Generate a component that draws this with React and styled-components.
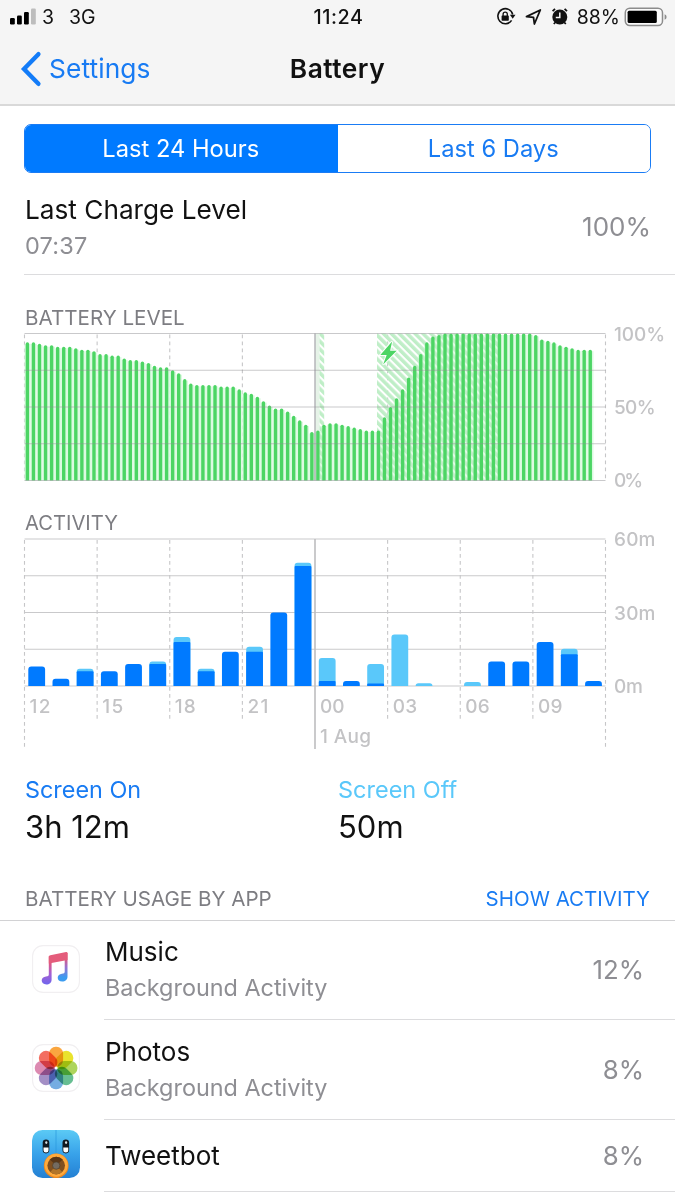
import React from "react";
import styled, { createGlobalStyle } from "styled-components";

const GlobalStyle = createGlobalStyle`
  * { box-sizing: border-box; }
  body {
    margin: 0;
    background: #fff;
    font-family: Inter, "Liberation Sans", sans-serif;
    color: #111;
  }
  svg { display: block; flex: none; overflow: visible; }
`;

const Screen = styled.main`
  width: 675px;
  height: 1200px;
  overflow: hidden;
  background: #fff;
`;

/* every label sets its own size, tracking and line box */
const Label = styled.span`
  display: block;
  white-space: nowrap;
  font-size: ${(p) => p.$size}px;
  line-height: ${(p) => p.$line || 32}px;
  letter-spacing: ${(p) => p.$track || 0}px;
  font-weight: ${(p) => p.$weight || 400};
  color: ${(p) => p.$color || "#111"};
`;

const Header = styled.header`
  height: 106px;
  background: #f5f5f5;
  border-bottom: 2px solid #d9d9d9;
`;

const StatusBar = styled.div`
  height: 34px;
  display: grid;
  grid-template-columns: 1fr auto 1fr;
  align-items: center;
  padding: 0 8px 0 10px;
`;

const StatusLeft = styled.div`
  display: flex;
  align-items: center;
  gap: 5px;
`;

const Network = styled(Label)`
  margin-left: 10px;
`;

const StatusRight = styled.div`
  display: flex;
  align-items: center;
  justify-content: flex-end;
`;

const Percent = styled(Label)`
  margin: 0 5px 0 6px;
`;

const NavBar = styled.nav`
  height: 70px;
  display: grid;
  grid-template-columns: 1fr auto 1fr;
  align-items: center;
  padding: 0 20px;
`;

const Back = styled.a`
  display: flex;
  align-items: center;
  gap: 7px;
`;

const Segments = styled.div`
  display: flex;
  width: 627px;
  height: 49px;
  margin: 18px 0 0 24px;
  border: 1.5px solid #1a7cf5;
  border-radius: 7px;
  overflow: hidden;
`;

const Segment = styled.button`
  flex: 1;
  border: 0;
  padding: 0 1px 0 0;
  display: flex;
  align-items: center;
  justify-content: center;
  font-family: inherit;
  background: ${(p) => (p.$active ? "#007aff" : "#fff")};
`;

const ChargeRow = styled.section`
  display: flex;
  justify-content: space-between;
  align-items: center;
  height: 102px;
  margin-left: 24px;
  padding: 6px 24px 0 1px;
  border-bottom: 1px solid #dcdcde;
`;

const ChartBlock = styled.section`
  padding: ${(p) => p.$top}px 0 0 24px;
`;

const ChartTitle = styled(Label)`
  padding-left: 1px;
`;

const Totals = styled.section`
  display: grid;
  grid-template-columns: 313px 1fr;
  padding: 22.5px 0 0 25px;
`;

const ListHeader = styled.div`
  display: flex;
  justify-content: space-between;
  align-items: center;
  height: 73px;
  padding: 31px 25px 0 25px;
  border-bottom: 1px solid #d2d2d4;
`;

const AppRow = styled.div`
  display: flex;
  align-items: center;
  height: ${(p) => p.$height}px;
  padding-left: 32px;
`;

const AppIcon = styled.div`
  padding-bottom: 3px;
`;

const AppBody = styled.div`
  flex: 1;
  align-self: stretch;
  display: flex;
  justify-content: space-between;
  align-items: center;
  margin-left: 24px;
  padding: 1px 31px 0 1px;
  border-bottom: 1px solid #dcdcde;
`;

const BLUE = "#187bf3";
const GREY = "#8e8e93";
const TITLE = "#7d7d82";
const AXIS = "#c3c3c5";
const LINE = "#c6c6c8";

const levels = [
  94, 94, 93, 92, 92, 91, 91, 91, 90, 89, 89, 88, 86, 86, 85, 85, 83, 82, 82,
  81, 80, 78, 77, 77, 75, 73, 69, 66, 65, 65, 65, 65, 64, 64, 64, 62, 60, 59,
  57, 54, 51, 49, 49, 47, 44, 41, 38, 33, 34, 38, 39, 39, 38, 37, 36, 35, 34,
  34, 34, 43, 50, 56, 62, 70, 78, 86, 94, 98, 99, 100, 100, 100, 100, 100, 100,
  100, 100, 100, 100, 100, 100, 100, 100, 100, 99, 96, 95, 94, 92, 91, 90, 89,
  89, 89,
];

// [minutes on screen, minutes off screen] for each hour
const activity = [
  [8, 0], [3, 0], [6, 1], [6, 0], [9, 0], [9, 1], [18, 2], [6, 1],
  [14, 0], [14, 2], [30, 0], [49, 1.3], [2, 9.4], [2, 0], [1, 8], [0, 21],
  [0, 1.1], [0, 0], [0, 1.6], [10, 0], [10, 0], [18, 0], [13, 2.2], [2, 0],
];

const WIDTH = 581;
const HEIGHT = 147;
const SLOT = WIDTH / 96;
const HOUR = WIDTH / 24;
const hours = ["12", "15", "18", "21", "00", "03", "06", "09"];

const AxisText = ({ x, y, w, children }) => (
  <text x={x} y={y} textLength={w} fontSize="19" fontWeight="500" fill={AXIS}>
    {children}
  </text>
);

const Rows = () =>
  [0, 1, 2, 3, 4].map((n) => (
    <line
      key={n}
      x1="0"
      x2={WIDTH}
      y1={(n * HEIGHT) / 4}
      y2={(n * HEIGHT) / 4}
      stroke="#8e8e93"
      strokeOpacity="0.48"
      strokeWidth="1.2"
    />
  ));

const Dash = ({ x, to }) => (
  <line x1={x} x2={x} y1="0" y2={to} stroke={LINE} strokeWidth="1.1" strokeDasharray="3.7 3.3" strokeDashoffset="-1" />
);

const LevelChart = () => (
  <svg width="651" height="160" viewBox="-0.5 -6.5 651 160">
    <defs>
      <pattern id="hatch" width="5.6" height="5.6" patternUnits="userSpaceOnUse" patternTransform="rotate(-45)">
        <rect width="3.5" height="5.6" fill="#bfeec7" />
      </pattern>
    </defs>
    {[0, 3, 6, 9, 15, 24].map((h) => (
      <Dash key={h} x={h * HOUR} to={HEIGHT} />
    ))}
    {levels.map((v, i) => (
      <rect
        key={i}
        x={i * SLOT}
        y={HEIGHT - (v * HEIGHT) / 100 + 1.5}
        width={SLOT + 0.1}
        height={(v * HEIGHT) / 100 - 1.5}
        fill="#dcfae1"
      />
    ))}
    <rect x="291" y="0" width="4" height={HEIGHT} fill="#e6f3e8" />
    <rect x="295" y="0" width="4.7" height={HEIGHT} fill="url(#hatch)" />
    <rect x="352.5" y="0" width="124" height={HEIGHT} fill="url(#hatch)" />
    {levels.map((v, i) => {
      const x = i * SLOT + 1.2;
      const y = HEIGHT - (v * HEIGHT) / 100;
      return <path key={i} d={`M${x} ${HEIGHT}V${y + 1.6}a1.7 1.6 0 0 1 3.4 0V${HEIGHT}z`} fill="#4cd564" />;
    })}
    <Rows />
    <line x1={HOUR * 12} x2={HOUR * 12} y1="0" y2={HEIGHT} stroke="#8e8e93" strokeOpacity="0.65" strokeWidth="1.5" />
    <path
      d="M367.6 8 L355.8 21.5 h6.4 L358.6 31 L372.2 17.2 h-6.6 L367.6 8z"
      fill="#4cd564"
      stroke="#fff"
      strokeWidth="2"
      paintOrder="stroke"
    />
    <AxisText x="589.5" y="7" w="51">100%</AxisText>
    <AxisText x="589.5" y="80.5" w="41.5">50%</AxisText>
    <AxisText x="589.5" y="153.5" w="29">0%</AxisText>
  </svg>
);

const ActivityChart = () => (
  <svg width="651" height="219" viewBox="-0.5 -7 651 219">
    <Rows />
    {[0, 3, 6, 9, 15, 18, 21, 24].map((h) => (
      <Dash key={h} x={h * HOUR} to={h % 24 === 0 ? 210 : 183} />
    ))}
    <line x1={HOUR * 12} x2={HOUR * 12} y1="0" y2="210" stroke="#bdbdbf" strokeWidth="1.6" />
    {activity.map(([on, off], i) => {
      const total = ((on + off) * HEIGHT) / 60;
      const r = Math.min(3, total);
      const x = i * HOUR + 3.8;
      const shape = (h, k) =>
        `M${x} ${HEIGHT}V${HEIGHT - h + k}q0 ${-k} ${k} ${-k}h${16.8 - 2 * k}q${k} 0 ${k} ${k}V${HEIGHT}z`;
      return (
        <g key={i}>
          {off > 0 && <path d={shape(total, r)} fill="#5ac8fa" />}
          {on > 0 && <path d={shape((on * HEIGHT) / 60, off ? 1 : r)} fill="#007aff" />}
        </g>
      );
    })}
    <AxisText x="589.5" y="7" w="41.5">60m</AxisText>
    <AxisText x="589.5" y="80.5" w="41.5">30m</AxisText>
    <AxisText x="589.5" y="154" w="29">0m</AxisText>
    {hours.map((h, i) => (
      <AxisText key={h} x={i * 3 * HOUR + 5} y="173.5" w={i < 4 ? 21 : 24.5}>
        {h}
      </AxisText>
    ))}
    <AxisText x="295.5" y="203.5" w="51">1 Aug</AxisText>
  </svg>
);

const Signal = () => (
  <svg width="27" height="18" viewBox="0 0 27 18">
    <rect x="0" y="10" width="4.8" height="6.5" rx="1.2" />
    <rect x="7" y="7.5" width="4.8" height="9" rx="1.2" />
    <rect x="14" y="4" width="4.8" height="12.5" rx="1.2" />
    <rect x="21" y="0.5" width="4.8" height="16" rx="1.2" fill="#bdbdbd" />
  </svg>
);

const StatusIcons = () => (
  <svg width="76" height="22" viewBox="495 6 76 22" fill="none" stroke="#111" strokeWidth="1.6">
    <path d="M511.6 20.4 A7.5 7.5 0 1 1 512.7 14.5" />
    <path d="M509.9 14.8h5.6l-2.8 3.9z" fill="#111" stroke="none" />
    <rect x="501.6" y="15.4" width="7.2" height="5.4" rx="0.7" fill="#111" stroke="none" />
    <path d="M503.1 16v-1.8a2.1 2.1 0 0 1 4.2 0V16" strokeWidth="1.3" />
    <path d="M526.5 16.6 L540.3 10 L534.4 24 L533.5 17.3 Z" strokeLinejoin="round" strokeWidth="1.8" />
    <circle cx="559.8" cy="17" r="7.5" fill="#111" stroke="none" />
    <path d="M552.6 11.2l2.4-2.3M564.6 8.9l2.4 2.3M555.2 22.5l-1.4 1.5M564.4 22.5l1.4 1.5" strokeWidth="1.8" />
    <path d="M559.8 12.6v5h-4" stroke="#f5f5f5" strokeWidth="1.5" />
  </svg>
);

const BatteryIcon = () => (
  <svg width="42" height="20" viewBox="0 0 42 20">
    <rect x="0.3" y="1.2" width="37.2" height="17.3" rx="4.5" fill="#fafafa" stroke="#8c8c8c" strokeWidth="1.5" />
    <rect x="2.6" y="3.8" width="29.2" height="12.2" rx="1.5" fill="#000" />
    <path d="M39.6 7.2q2 0.7 2 2.8t-2 2.8z" fill="#8c8c8c" />
  </svg>
);

const Chevron = () => (
  <svg width="22" height="36" viewBox="0 0 22 36" fill="none" stroke="#137cf8" strokeWidth="4.4" strokeLinecap="round">
    <path d="M18.4 3.2 L4 18 L18.4 32.8" />
  </svg>
);

const Tile = () => (
  <rect x="0.6" y="0.6" width="46.8" height="46.8" rx="10.5" fill="#fff" stroke="#f1eff1" strokeWidth="1.1" />
);

const MusicIcon = () => (
  <svg width="48" height="48" viewBox="0 0 48 48">
    <defs>
      <linearGradient id="noteL" x1="0" y1="0" x2="0" y2="1">
        <stop offset="0.2" stopColor="#e75676" />
        <stop offset="0.6" stopColor="#a85fd0" />
        <stop offset="1" stopColor="#6f66ee" />
      </linearGradient>
      <linearGradient id="noteR" x1="0" y1="0" x2="0" y2="1">
        <stop offset="0.15" stopColor="#e45575" />
        <stop offset="0.5" stopColor="#9a70d0" />
        <stop offset="0.85" stopColor="#3c9cf0" />
      </linearGradient>
    </defs>
    <Tile />
    <path d="M16.8 11h2.8v23.5c0 3.3-2.3 5-5.2 5-2.9 0-4.7-1.6-4.7-3.9 0-2.4 1.8-4 4.3-4.2 2-.2 2.8-.6 2.8-2z" fill="url(#noteL)" />
    <path d="M32.7 8h2.8v23.5c0 3.3-2.3 5-5.2 5-2.9 0-4.6-1.6-4.6-3.8 0-2.3 1.8-3.8 4.2-4 2-.2 2.8-.6 2.8-2z" fill="url(#noteR)" />
    <path d="M16.8 12q0-1.5 1.5-1.8l15.8-3.1q1.4-.2 1.4 1.2v6.7l-18.7 3.6z" fill="#e45c7b" />
  </svg>
);

const petals = ["#f99a25", "#e6df10", "#a3ce45", "#52b583", "#62a2de", "#967fbd", "#d77aa6", "#f15a4b"];

const Flower = styled.g`
  isolation: isolate;
`;

const Petal = styled.rect`
  mix-blend-mode: multiply;
`;

const PhotosIcon = () => (
  <svg width="48" height="48" viewBox="0 0 48 48">
    <Tile />
    <Flower>
      {petals.map((c, i) => (
        <Petal
          key={c}
          x="17.1"
          y="2.7"
          width="14"
          height="20"
          rx="6.6"
          fill={c}
          fillOpacity="0.88"
          transform={`rotate(${i * 45} 24.1 24)`}
        />
      ))}
    </Flower>
    <circle cx="24.1" cy="24" r="1.3" fill="#fff" />
  </svg>
);

const TweetbotIcon = () => (
  <svg width="48" height="48" viewBox="0 0 48 48">
    <defs>
      <linearGradient id="bot" x1="0" y1="0" x2="0" y2="1">
        <stop offset="0" stopColor="#5bcaf5" />
        <stop offset="0.5" stopColor="#38a2ea" />
        <stop offset="1" stopColor="#2480d3" />
      </linearGradient>
      <clipPath id="botClip">
        <rect width="48" height="48" rx="10.5" />
      </clipPath>
    </defs>
    <g clipPath="url(#botClip)">
      <rect width="48" height="48" fill="url(#bot)" />
      <path d="M24 0v24" stroke="#299add" strokeWidth="0.7" />
      {[14, 33.8].map((x) => (
        <g key={x}>
          <rect x={x - 3.3} y="9.4" width="6.6" height="14" rx="3.3" fill="#111820" />
          <path d={`M${x - 2.5} 17.6h5v2.4a2.5 2.5 0 0 1-5 0z`} fill="#fff" />
          <ellipse cx={x + 0.3} cy="12.6" rx="1.1" ry="1.3" fill="#d8e1e5" />
        </g>
      ))}
      <circle cx="24.2" cy="35.8" r="12.4" fill="#e98a24" />
      <circle cx="24.2" cy="35.2" r="11.5" fill="#ffaa3c" />
      <circle cx="24.2" cy="35.6" r="8.8" fill="#81501f" />
      <path d="M24.2 35.6L17.7 29.6A8.8 8.8 0 0 1 30.7 29.6z" fill="#5b3717" />
      <path d="M24.2 35.6L18.2 42A8.8 8.8 0 0 0 30.2 42z" fill="#b27529" />
      <circle cx="24.2" cy="35.6" r="3.7" fill="#746b60" stroke="#50402d" strokeWidth="0.7" />
    </g>
  </svg>
);

const apps = [
  { name: "Music", note: "Background Activity", value: "12%", icon: <MusicIcon />, height: 99 },
  { name: "Photos", note: "Background Activity", value: "8%", icon: <PhotosIcon />, height: 100 },
  { name: "Tweetbot", value: "8%", icon: <TweetbotIcon />, height: 72 },
];

const App = () => (
  <Screen>
    <GlobalStyle />
    <Header>
      <StatusBar>
        <StatusLeft>
          <Signal />
          <Label $size={19.5}>3</Label>
          <Network $size={19.5}>3G</Network>
        </StatusLeft>
        <Label $size={19.8} $weight={500} $track={0.5}>11:24</Label>
        <StatusRight>
          <StatusIcons />
          <Percent $size={19.5}>88%</Percent>
          <BatteryIcon />
        </StatusRight>
      </StatusBar>
      <NavBar>
        <Back>
          <Chevron />
          <Label $size={26.3} $track={0.1} $color={BLUE}>Settings</Label>
        </Back>
        <Label $size={26.3} $track={0.5} $weight={600}>Battery</Label>
      </NavBar>
    </Header>
    <Segments>
      <Segment $active><Label $size={23.7} $color="#fff">Last 24 Hours</Label></Segment>
      <Segment><Label $size={23.7} $color={BLUE}>Last 6 Days</Label></Segment>
    </Segments>
    <ChargeRow>
      <div>
        <Label $size={26.2} $line={37}>Last Charge Level</Label>
        <Label $size={23.5} $line={35} $track={0.2} $color={GREY}>07:37</Label>
      </div>
      <Label $size={26} $color={GREY}>100%</Label>
    </ChargeRow>
    <ChartBlock $top={34}>
      <ChartTitle $size={20.6} $line={18} $color={TITLE}>BATTERY LEVEL</ChartTitle>
      <LevelChart />
    </ChartBlock>
    <ChartBlock $top={27}>
      <ChartTitle $size={20.2} $line={18} $color={TITLE}>ACTIVITY</ChartTitle>
      <ActivityChart />
    </ChartBlock>
    <Totals>
      <div>
        <Label $size={23.4} $color={BLUE}>Screen On</Label>
        <Label $size={31} $line={42}>3h 12m</Label>
      </div>
      <div>
        <Label $size={23.5} $color="#5ac8fa">Screen Off</Label>
        <Label $size={31} $line={42}>50m</Label>
      </div>
    </Totals>
    <ListHeader>
      <Label $size={20.6} $color={TITLE}>BATTERY USAGE BY APP</Label>
      <Label $size={20.5} $color={BLUE}>SHOW ACTIVITY</Label>
    </ListHeader>
    {apps.map((app) => (
      <AppRow key={app.name} $height={app.height}>
        <AppIcon>{app.icon}</AppIcon>
        <AppBody>
          <div>
            <Label $size={26} $line={36}>{app.name}</Label>
            {app.note && <Label $size={23.4} $line={36} $color={GREY}>{app.note}</Label>}
          </div>
          <Label $size={25.8} $color={GREY}>{app.value}</Label>
        </AppBody>
      </AppRow>
    ))}
  </Screen>
);

export default App;
